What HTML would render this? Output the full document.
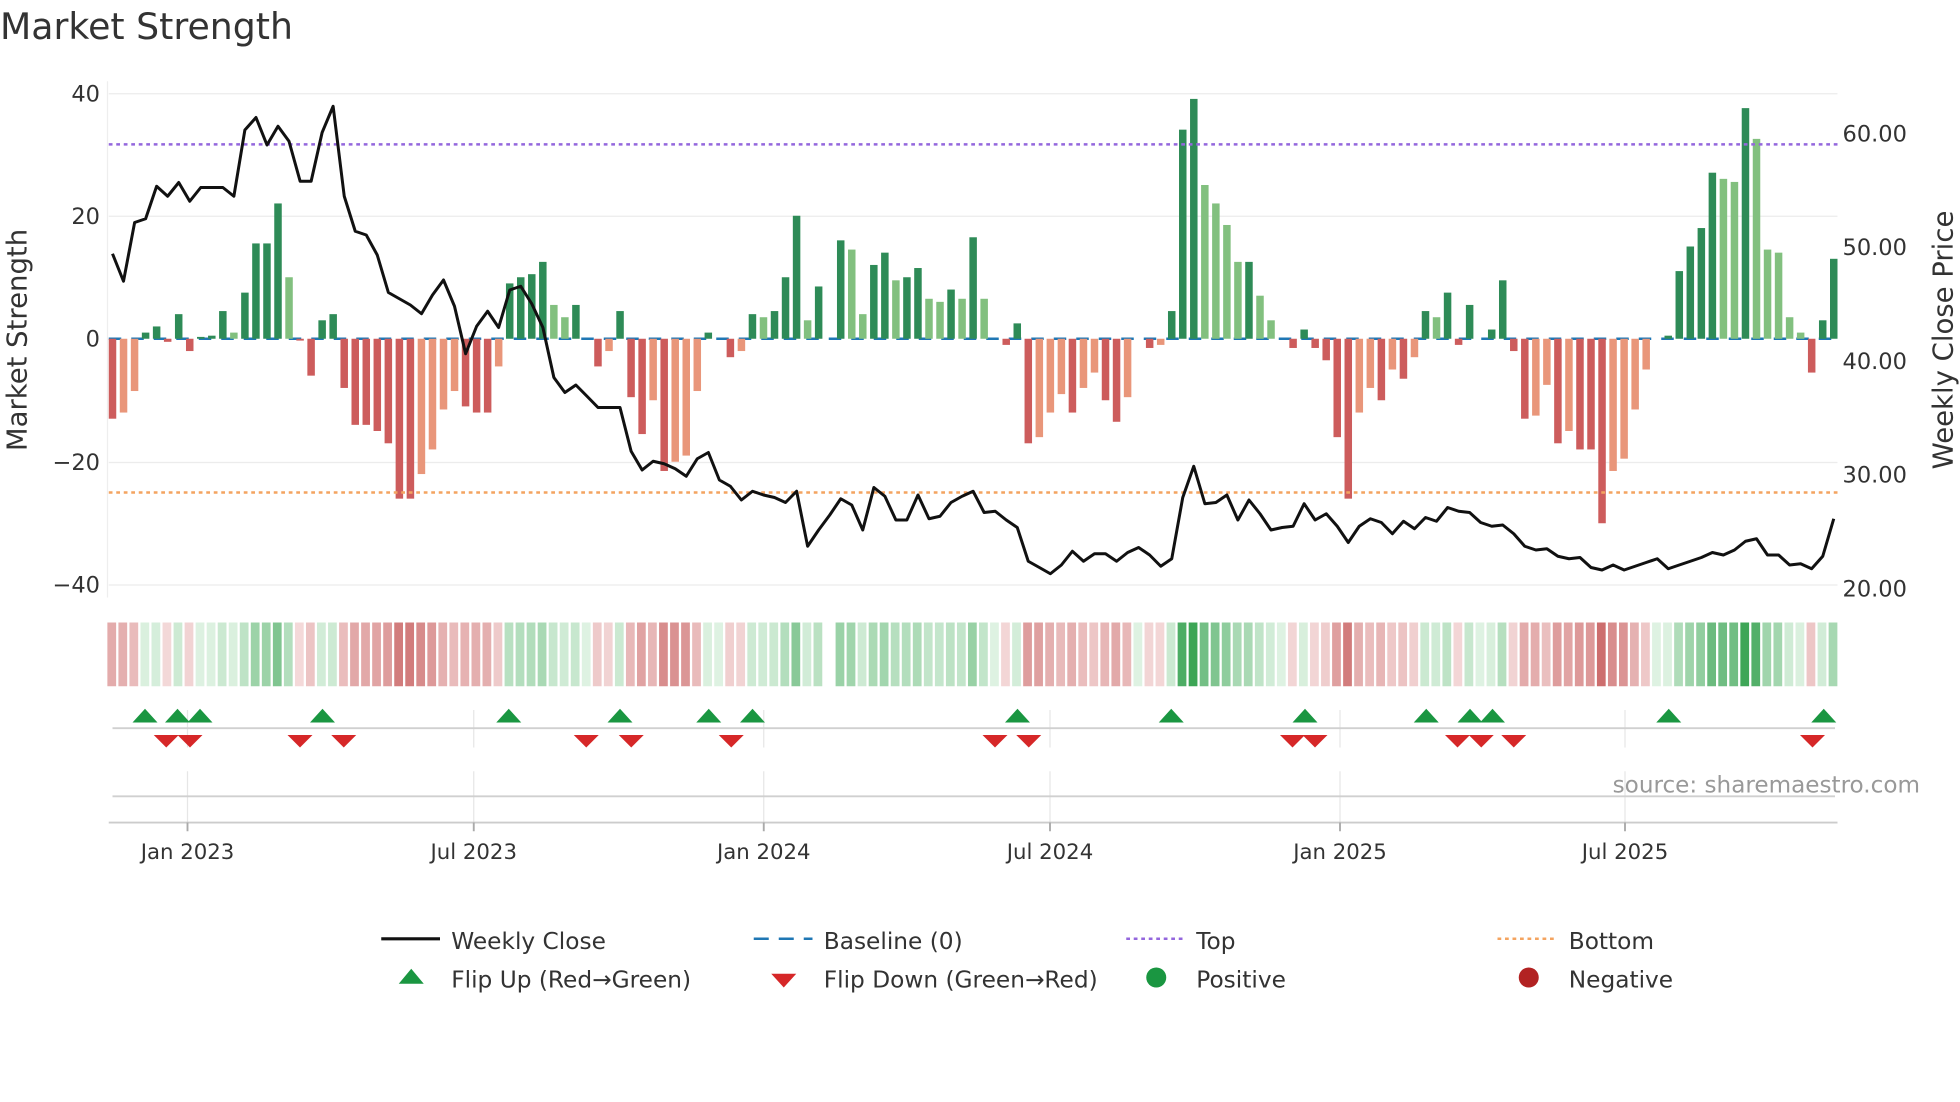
<!DOCTYPE html>
<html><head><meta charset="utf-8"><style>
html,body{margin:0;padding:0;background:#fff;overflow:hidden}
#wrap{width:1960px;height:1102px;position:relative}
svg text{font-family:"DejaVu Sans","Liberation Sans",sans-serif}
</style></head><body><div id="wrap">
<svg id="s" width="1960" height="1102" viewBox="0 0 1568 881.6" xmlns="http://www.w3.org/2000/svg">
<text x="0" y="31" font-size="29" fill="#333">Market Strength</text>
<g id="grid" stroke="#ececec" stroke-width="1">
<line x1="87" x2="1470" y1="75" y2="75"/><line x1="87" x2="1470" y1="173" y2="173"/>
<line x1="87" x2="1470" y1="370" y2="370"/><line x1="87" x2="1470" y1="468" y2="468"/>
</g>
<line x1="86" x2="86" y1="65" y2="478" stroke="#eee"/>
<g font-size="18" fill="#333" text-anchor="end">
<text x="80" y="81">40</text><text x="80" y="179">20</text><text x="80" y="277">0</text>
<text x="80" y="376">−20</text><text x="80" y="474">−40</text>
</g>
<g font-size="18" fill="#333">
<text x="1474" y="113">60.00</text><text x="1474" y="204">50.00</text><text x="1474" y="295">40.00</text>
<text x="1474" y="386">30.00</text><text x="1474" y="477">20.00</text>
</g>
<text transform="translate(21,272) rotate(-90)" font-size="22" fill="#333" text-anchor="middle">Market Strength</text>
<text transform="translate(1562,272) rotate(-90)" font-size="22" fill="#333" text-anchor="middle">Weekly Close Price</text>
<line x1="87" x2="1470" y1="271" y2="271" stroke="#1f77b4" stroke-width="2" stroke-dasharray="10,8"/>
<g id="bars"></g>
<line x1="87" x2="1470" y1="115.5" y2="115.5" stroke="#9467dd" stroke-width="2" stroke-dasharray="3,3"/>
<line x1="87" x2="1470" y1="394" y2="394" stroke="#f4a460" stroke-width="2" stroke-dasharray="3,3"/>
<polyline id="price" fill="none" stroke="#111" stroke-width="2.4" stroke-linejoin="round"/>
<g id="heat"></g>
<g stroke="#e6e6e6" stroke-width="1">
<line x1="150" x2="150" y1="568" y2="598"/><line x1="379" x2="379" y1="568" y2="598"/><line x1="611" x2="611" y1="568" y2="598"/><line x1="840" x2="840" y1="568" y2="598"/><line x1="1072" x2="1072" y1="568" y2="598"/><line x1="1300" x2="1300" y1="568" y2="598"/>
<line x1="150" x2="150" y1="617" y2="658"/><line x1="379" x2="379" y1="617" y2="658"/><line x1="611" x2="611" y1="617" y2="658"/><line x1="840" x2="840" y1="617" y2="658"/><line x1="1072" x2="1072" y1="617" y2="658"/><line x1="1300" x2="1300" y1="617" y2="658"/>
</g>
<line x1="90" x2="1468" y1="582.5" y2="582.5" stroke="#d0d0d0" stroke-width="1.5"/>
<line x1="90" x2="1468" y1="637" y2="637" stroke="#d0d0d0" stroke-width="1.5"/>
<line x1="87" x2="1470" y1="658" y2="658" stroke="#ccc" stroke-width="1.5"/>
<g stroke="#aaa" stroke-width="1.5">
<line x1="150" x2="150" y1="658" y2="665"/><line x1="379" x2="379" y1="658" y2="665"/><line x1="611" x2="611" y1="658" y2="665"/><line x1="840" x2="840" y1="658" y2="665"/><line x1="1072" x2="1072" y1="658" y2="665"/><line x1="1300" x2="1300" y1="658" y2="665"/>
</g>
<g id="flips"></g>
<text x="1536" y="634" font-size="18.5" fill="#999" text-anchor="end">source: sharemaestro.com</text>
<g font-size="17" fill="#333" text-anchor="middle">
<text x="150" y="687">Jan 2023</text><text x="379" y="687">Jul 2023</text><text x="611" y="687">Jan 2024</text>
<text x="840" y="687">Jul 2024</text><text x="1072" y="687">Jan 2025</text><text x="1300" y="687">Jul 2025</text>
</g>
<g font-size="18.6" fill="#333">
<line x1="305" x2="352" y1="751" y2="751" stroke="#111" stroke-width="2.5"/><text x="361" y="759">Weekly Close</text>
<line x1="603" x2="650" y1="751" y2="751" stroke="#1f77b4" stroke-width="2" stroke-dasharray="12,8"/><text x="659" y="759">Baseline (0)</text>
<line x1="901" x2="946" y1="751" y2="751" stroke="#9467dd" stroke-width="2" stroke-dasharray="3,3"/><text x="957" y="759">Top</text>
<line x1="1198" x2="1244" y1="751" y2="751" stroke="#f4a460" stroke-width="2" stroke-dasharray="3,3"/><text x="1255" y="759">Bottom</text>
<polygon points="319,787 329,775 339,787" fill="#1a9641"/><text x="361" y="790">Flip Up (Red→Green)</text>
<polygon points="617,779 637,779 627,790" fill="#d62728"/><text x="659" y="790">Flip Down (Green→Red)</text>
<circle cx="925" cy="782" r="8" fill="#1a9641"/><text x="957" y="790">Positive</text>
<circle cx="1223" cy="782" r="8" fill="#b22222"/><text x="1255" y="790">Negative</text>
</g>
</svg></div>
<script>
var V=[-13,-12,-8.5,1,2,-0.5,4,-2,0.3,0.5,4.5,1,7.5,15.5,15.5,22,10,-0.3,-6,3,4,-8,-14,-14,-15,-17,-26,-26,-22,-18,-11.5,-8.5,-11,-12,-12,-4.5,9,10,10.5,12.5,5.5,3.5,5.5,0,-4.5,-2,4.5,-9.5,-15.5,-10,-21.5,-20,-19,-8.5,1,0,-3,-2,4,3.5,4.5,10,20,3,8.5,0,16,14.5,4,12,14,9.5,10,11.5,6.5,6,8,6.5,16.5,6.5,0,-1,2.5,-17,-16,-12,-9,-12,-8,-5.5,-10,-13.5,-9.5,0,-1.5,-1,4.5,34,39,25,22,18.5,12.5,12.5,7,3,0,-1.5,1.5,-1.5,-3.5,-16,-26,-12,-8,-10,-5,-6.5,-3,4.5,3.5,7.5,-1,5.5,0,1.5,9.5,-2,-13,-12.5,-7.5,-17,-15,-18,-18,-30,-21.5,-19.5,-11.5,-5,0,0.5,11,15,18,27,26,25.5,37.5,32.5,14.5,14,3.5,1,-5.5,3,13];
var P=[203,225,178,175,149,157,146,161,150,150,150,157,104,94,116,101,113,145,145,106,85,157,185,188,204,234,239,244,251,236,224,245,283,261,249,262,232,229,243,262,302,314,308,317,326,326,326,361,376,369,371,375,381,367,362,384,389,400,393,396,398,402,393,437,424,412,399,404,424,390,397,416,416,396,415,413,402,397,393,410,409,416,422,449,454,459,452,441,449,443,443,449,442,438,444,453,447,398,373,403,402,396,416,400,411,424,422,421,403,416,411,421,434,421,415,418,427,417,423,414,417,406,409,410,418,421,420,427,437,440,439,445,447,446,454,456,452,456,453,450,447,455,452,449,446,442,444,440,433,431,444,444,452,451,455,445,415];
var N=V.length,st=(1467-90)/(N-1),ns="http://www.w3.org/2000/svg";
function el(g,t,a){var e=document.createElementNS(ns,t);for(var k in a)e.setAttribute(k,a[k]);g.appendChild(e);}
var B=document.getElementById('bars'),H=document.getElementById('heat'),pts=[];
function mix(a,b,t){t=Math.max(0,Math.min(1,t));var r=a.map(function(v,i){return Math.round(v+(b[i]-v)*t)});return 'rgb('+r+')';}
for(var i=0;i<N;i++){var x=90+st*i,v=V[i],pv=i?V[i-1]:0,y0=271,y=271-v*4.92;
 var c;if(v>=0)c=(v>=pv)?'#2e8b57':'#82c07f';else c=(v<=pv)?'#cd5c5c':'#e9967a';
 if(Math.abs(v)>0.2)el(B,'rect',{x:x-3,y:Math.min(y,y0),width:6,height:Math.abs(y-y0),fill:c});
 if(!(x>658&&x<668)){var hc=v>=0?mix([222,242,226],[60,165,85],v/38):mix([244,218,218],[205,110,110],-v/30);
 el(H,'rect',{x:x-4.1,y:498,width:7,height:51,fill:hc});}
 pts.push(x.toFixed(1)+','+P[i]);}
document.getElementById('price').setAttribute('points',pts.join(' '));
var F=document.getElementById('flips');
[116,142,160,258,407,496,567,602,814,937,1044,1141,1176,1194,1335,1459].forEach(function(x){el(F,'polygon',{points:(x-10)+',578 '+x+',567 '+(x+10)+',578',fill:'#1a9641'});});
[133,152,240,275,469,505,585,796,823,1034,1052,1166,1185,1211,1450].forEach(function(x){el(F,'polygon',{points:(x-10)+',588 '+(x+10)+',588 '+x+',598',fill:'#d62728'});});
</script></body></html>
